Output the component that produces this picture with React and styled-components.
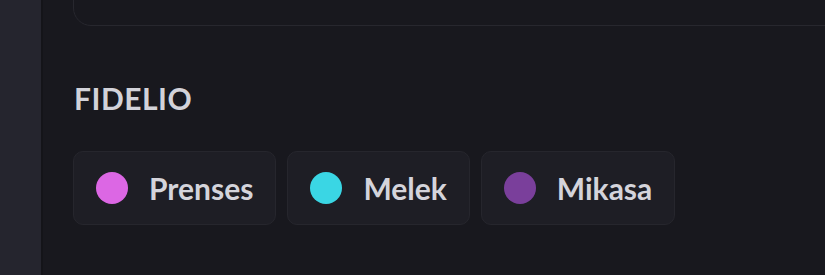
import React from 'react'
import styled, { createGlobalStyle } from 'styled-components'

const GlobalStyle = createGlobalStyle`
  html, body {
    margin: 0;
    padding: 0;
    background: #18181e;
    font-family: Lato, Inter, "Noto Sans", sans-serif;
  }
`;

const Page = styled.div`
  display: flex;
  width: 825px;
  height: 275px;
  overflow: hidden;
  background: #18181e;
`;

const Sidebar = styled.div`
  width: 41px;
  flex-shrink: 0;
  background: #25252e;
  border-right: 2px solid #141419;
`;

const Main = styled.div`
  flex: 1;
  padding-left: 30px;
  overflow: hidden;
`;

const TopCard = styled.div`
  height: 80px;
  margin-top: -56px;
  margin-right: -60px;
  border: 1.5px solid #27272e;
  border-radius: 18px;
  background: #18181e;
`;

const SectionTitle = styled.h2`
  margin: 57px 0 0 1px;
  font-size: 30px;
  line-height: 1;
  font-weight: 700;
  letter-spacing: 0.5px;
  color: #d2d2d9;
`;

const ChipRow = styled.div`
  display: flex;
  gap: 11px;
  margin-top: 38px;
`;

const Chip = styled.div`
  display: flex;
  align-items: center;
  gap: 21px;
  height: 74px;
  box-sizing: border-box;
  padding: 0 22px;
  background: #1e1e25;
  border: 1px solid #26262d;
  border-radius: 10px;
`;

const Dot = styled.span`
  width: 32px;
  height: 32px;
  border-radius: 50%;
  background: ${(p) => p.color};
  flex-shrink: 0;
`;

const ChipLabel = styled.span`
  font-size: 30px;
  font-weight: 700;
  color: #d4d4db;
`;

const players = [
  { name: 'Prenses', color: '#dc67e4' },
  { name: 'Melek', color: '#3ad6e4' },
  { name: 'Mikasa', color: '#7a3f9b' },
]

const App = () => {
  return (
    <Page>
      <GlobalStyle />
      <Sidebar />
      <Main>
        <TopCard />
        <SectionTitle>FIDELIO</SectionTitle>
        <ChipRow>
          {players.map((p) => (
            <Chip key={p.name}>
              <Dot color={p.color} />
              <ChipLabel>{p.name}</ChipLabel>
            </Chip>
          ))}
        </ChipRow>
      </Main>
    </Page>
  )
}

export default App;
